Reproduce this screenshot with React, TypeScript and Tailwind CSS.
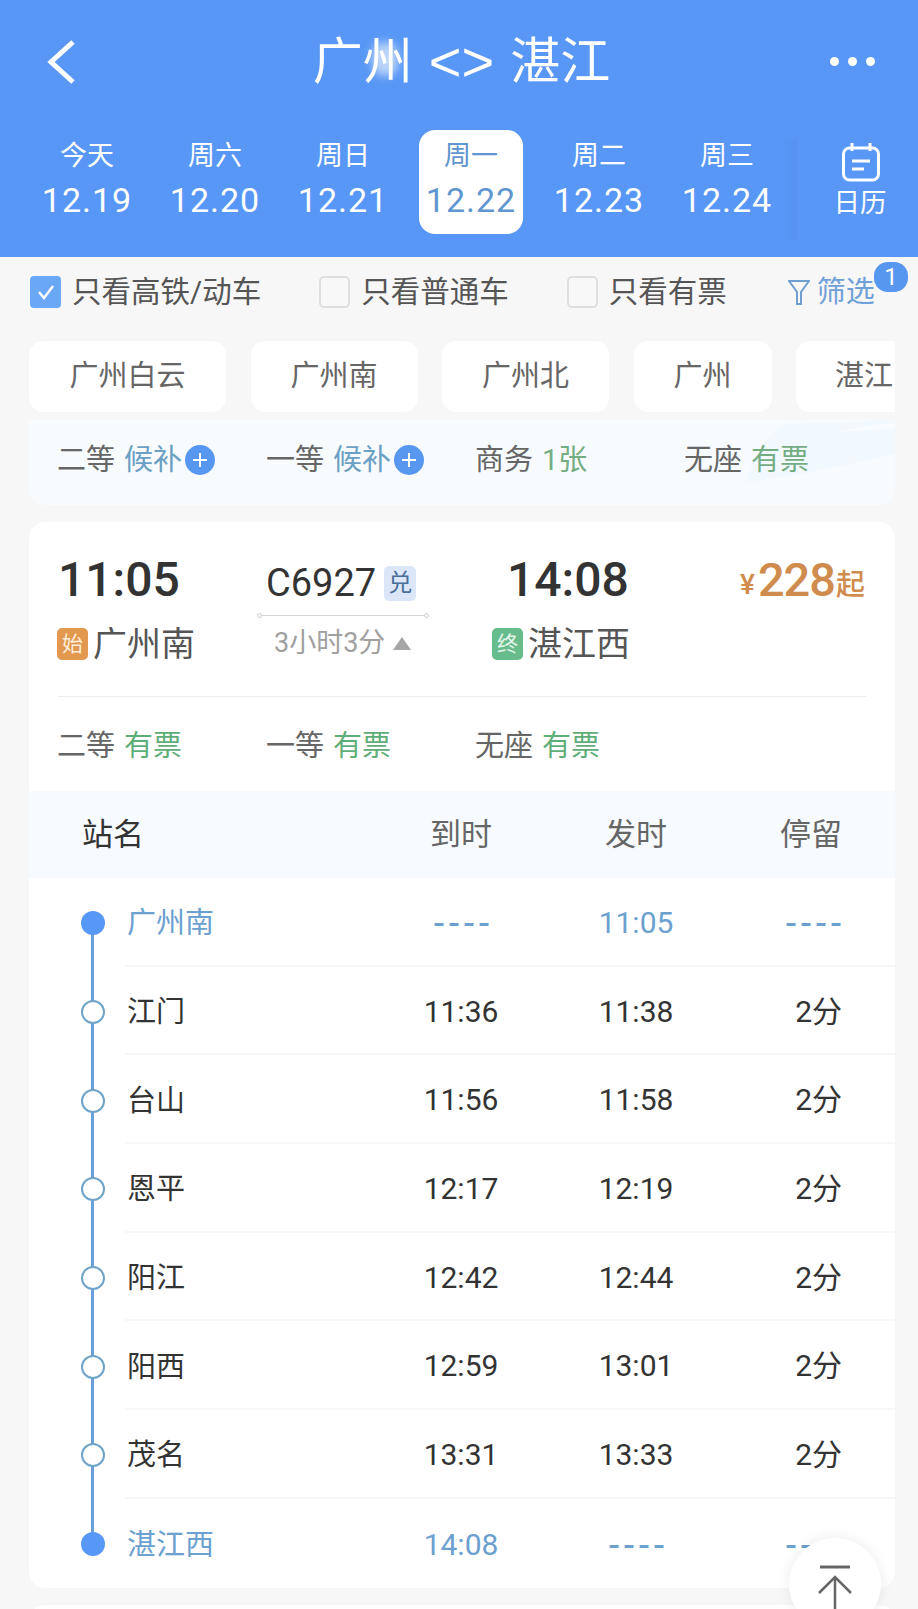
const FONT = "font-['Roboto','Noto_Sans_CJK_SC',sans-serif]";

const dates = [
  { week: '今天', day: '12.19' },
  { week: '周六', day: '12.20' },
  { week: '周日', day: '12.21' },
  { week: '周一', day: '12.22', active: true },
  { week: '周二', day: '12.23' },
  { week: '周三', day: '12.24' },
];

const chips = [
  { name: '广州白云', w: 'w-[197px]' },
  { name: '广州南', w: 'w-[167px]' },
  { name: '广州北', w: 'w-[167px]' },
  { name: '广州', w: 'w-[138px]' },
  { name: '湛江', w: 'w-[136px]' },
];

const stops = [
  { name: '广州南', arrive: '----', depart: '11:05', stay: '----', end: true },
  { name: '江门', arrive: '11:36', depart: '11:38', stay: '2分' },
  { name: '台山', arrive: '11:56', depart: '11:58', stay: '2分' },
  { name: '恩平', arrive: '12:17', depart: '12:19', stay: '2分' },
  { name: '阳江', arrive: '12:42', depart: '12:44', stay: '2分' },
  { name: '阳西', arrive: '12:59', depart: '13:01', stay: '2分' },
  { name: '茂名', arrive: '13:31', depart: '13:33', stay: '2分' },
  { name: '湛江西', arrive: '14:08', depart: '----', stay: '----', end: true },
];

function Check({ label, checked }: { label: string; checked?: boolean }) {
  return (
    <div className="flex items-center gap-[11px]">
      <div
        className={
          checked
            ? 'flex h-[32px] w-[31px] items-center justify-center rounded-[4px] bg-[#6aa8f5]'
            : 'h-[32px] w-[31px] rounded-[5px] border-2 border-[#dfdfdf] bg-[#f8f8f8]'
        }
      >
        {checked && (
          <svg width="20" height="20" viewBox="0 0 20 20" fill="none" stroke="#fff" strokeWidth="2.4">
            <path d="M3 10 L8 16 L17 4" />
          </svg>
        )}
      </div>
      <span className="pt-[1px] text-[29.5px] leading-none text-[#555]">{label}</span>
    </div>
  );
}

function Seat({ type, state, color, plus }: { type: string; state: string; color: string; plus?: boolean }) {
  return (
    <div className="flex w-[209px] items-center">
      <span className="text-[29px] leading-none text-[#666]">{type}</span>
      <span className={`ml-[9px] text-[29px] leading-none ${color}`}>{state}</span>
      {plus && (
        <span className="ml-[3px] flex h-[30px] w-[30px] items-center justify-center rounded-full bg-[#5797f0]">
          <svg width="18" height="18" viewBox="0 0 18 18" stroke="#fff" strokeWidth="2">
            <path d="M9 2 V16 M2 9 H16" />
          </svg>
        </span>
      )}
    </div>
  );
}

function Cell({ value, dashClass }: { value: string; dashClass: string }) {
  // the dashes in the picture are wider than the font's hyphen
  if (value === '----') {
    return (
      <span className={`inline-block font-['Liberation_Sans'] text-[36px] leading-[30px] tracking-[3px] ${dashClass}`}>
        {value}
      </span>
    );
  }
  return <span className="inline-block">{value}</span>;
}

export default function App() {
  return (
    <div className={`relative h-[1609px] w-[918px] overflow-hidden bg-[#f7f7f7] ${FONT}`}>
      {/* 顶部 */}
      <div className="h-[257px] bg-[#5897f5]">
        <div className="relative flex h-[130px] items-center justify-center pb-[6px] text-white">
          <svg className="absolute left-[46px] top-[40px]" width="30" height="44" viewBox="0 0 30 44" fill="none" stroke="#fff" strokeWidth="5">
            <path d="M27 2 L5 22 L27 42" />
          </svg>
          <div className="ml-[5px] flex items-center text-[50px] leading-none">
            <span>广州</span>
            <span className="mx-[16px] font-['Liberation_Sans'] text-[56px]">&lt;&gt;</span>
            <span>湛江</span>
          </div>
          <div className="absolute left-[372px] top-[42px] h-[34px] w-[26px] rounded-full bg-white/60 blur-[5px]" />
          <div className="absolute right-[43px] top-[57px] flex gap-[9px]">
            <span className="h-[9px] w-[9px] rounded-full bg-white" />
            <span className="h-[9px] w-[9px] rounded-full bg-white" />
            <span className="h-[9px] w-[9px] rounded-full bg-white" />
          </div>
        </div>
        <div className="flex h-[104px] pl-[23px]">
          {dates.map((d) => (
            <div key={d.day} className="flex w-[128px] justify-center">
              <div
                className={`flex h-[104px] w-[104px] flex-col items-center rounded-[16px] pt-[11px] ${
                  d.active ? 'bg-white text-[#5f96d0]' : 'text-white'
                }`}
              >
                <span className="text-[27px] leading-[30px]">{d.week}</span>
                <span className="mt-[10px] text-[34px] leading-[39px] tracking-[1px]">{d.day}</span>
              </div>
            </div>
          ))}
          <div className="relative -mt-[1px] ml-[16px] flex w-[108px] flex-col items-center pt-[13px] text-white">
            <div className="absolute -left-[24px] top-[11px] h-[100px] w-[14px] bg-gradient-to-r from-[#5897f5] to-[#5693f1]" />
            <svg width="40" height="40" viewBox="0 0 40 40" fill="none" stroke="#fff" strokeWidth="3">
              <rect x="2.5" y="6" width="35" height="32" rx="6" />
              <path d="M11 1 V9 M29 1 V9 M11 19 H29 M11 27 H23" />
            </svg>
            <span className="mt-[6px] -ml-[2px] text-[26.5px] leading-[30px]">日历</span>
          </div>
        </div>
      </div>

      {/* 筛选 */}
      <div className="relative flex h-[68px] items-center pt-[2px] pl-[30px]">
        <Check label="只看高铁/动车" checked />
        <div className="ml-[58px]">
          <Check label="只看普通车" />
        </div>
        <div className="ml-[58px]">
          <Check label="只看有票" />
        </div>
        <div className="ml-[61px] flex items-center gap-[7px]">
          <svg width="22" height="28" viewBox="0 0 22 28" fill="none" stroke="#6f9fd0" strokeWidth="2">
            <path d="M1 3 H21 L13 14 V26 H9 V14 Z" />
          </svg>
          <span className="text-[29px] leading-none text-[#6fa0d8]">筛选</span>
        </div>
        <div className="absolute left-[874px] top-[5px] flex h-[30px] w-[34px] items-center justify-center rounded-[14px] bg-[#5797f0] text-[24px] leading-none text-white">
          1
        </div>
      </div>

      {/* 车站 */}
      <div className="mx-[29px] mt-[16px] flex w-[866px] gap-[24.5px] overflow-hidden">
        {chips.map((c) => (
          <div
            key={c.name}
            className={`flex h-[71px] shrink-0 items-center justify-center rounded-[14px] bg-white text-[29px] leading-none text-[#666] ${c.w}`}
          >
            {c.name}
          </div>
        ))}
      </div>

      <div className="relative ml-[29px] mt-[8px] h-[85px] w-[866px] overflow-hidden rounded-b-[16px] bg-[#f7fbfe] pl-[28px] pt-[25px]">
        <svg className="absolute right-0 top-0" width="170" height="85" viewBox="0 0 170 85">
          <path fill="#f2f9fe" d="M170 0 L60 4 C40 14 28 36 22 62 C60 58 120 46 170 34 Z" />
          <path fill="#f9fcff" d="M115 12 C135 6 155 4 170 3 L170 8 C150 9 130 11 115 12 Z" />
        </svg>
        <div className="relative flex">
          <Seat type="二等" state="候补" color="text-[#6b9fc4]" plus />
          <Seat type="一等" state="候补" color="text-[#6b9fc4]" plus />
          <Seat type="商务" state="1张" color="text-[#74ad83]" />
          <Seat type="无座" state="有票" color="text-[#74ad83]" />
        </div>
      </div>

      {/* 车次卡片 */}
      <div className="ml-[29px] mt-[17px] h-[1066px] w-[866px] overflow-hidden rounded-[16px] bg-white">
        <div className="flex h-[174px] pt-[36px]">
          <div className="w-[228px] pl-[29px]">
            <div className="text-[48px] leading-[44px] font-medium text-[#333]">11:05</div>
            <div className="mt-[25px] flex items-center">
              <span className="-ml-[1px] flex h-[32px] w-[31px] items-center justify-center rounded-[5px] bg-[#e2984f] text-[21px] leading-none text-[#ffeeda]">
                始
              </span>
              <span className="ml-[5px] text-[34px] leading-none text-[#555]">广州南</span>
            </div>
          </div>
          <div className="w-[233px]">
            <div className="flex items-center pt-[3px] pl-[9px]">
              <span className="text-[38px] leading-[44px] text-[#333]">C6927</span>
              <span className="ml-[8px] flex h-[35px] w-[32px] items-center justify-center rounded-[5px] bg-[#dbe7f8] text-[24px] leading-none text-[#4a6d9a]">
                兑
              </span>
            </div>
            <div className="mt-[8px] flex w-[172px] items-center">
              <span className="h-[5px] w-[5px] rounded-full border border-[#ccc]" />
              <span className="h-px flex-1 bg-[#d4d4d4]" />
              <span className="h-[5px] w-[5px] rounded-full border border-[#ccc]" />
            </div>
            <div className="mt-[12px] flex items-center pl-[17px] text-[27px] leading-none text-[#a0a0a0]">
              3小时3分
              <span className="ml-[8px] h-0 w-0 border-x-[9px] border-b-[13px] border-x-transparent border-b-[#a5a5a5]" />
            </div>
          </div>
          <div className="w-[250px] pl-[2px]">
            <div className="pl-[15px] text-[48px] leading-[44px] font-medium text-[#333]">14:08</div>
            <div className="mt-[25px] flex items-center">
              <span className="flex h-[32px] w-[31px] items-center justify-center rounded-[5px] bg-[#68bc8c] text-[21px] leading-none text-[#e3f6ea]">
                终
              </span>
              <span className="ml-[5px] text-[34px] leading-none text-[#555]">湛江西</span>
            </div>
          </div>
          <div className="flex h-[44px] items-end leading-none font-medium text-[#d08c4e]">
            <span className="mb-[3px] text-[28px]">¥</span>
            <span className="ml-[3px] text-[47px] leading-[45px] tracking-[-1px]">228</span>
            <span className="mb-[2px] ml-[1px] text-[29px]">起</span>
          </div>
        </div>

        <div className="mx-[29px] h-px bg-[#ececec]" />

        <div className="flex h-[94px] items-center pt-[4px] pl-[28px]">
          <Seat type="二等" state="有票" color="text-[#5fae78]" />
          <Seat type="一等" state="有票" color="text-[#5fae78]" />
          <Seat type="无座" state="有票" color="text-[#5fae78]" />
        </div>

        {/* 经停站 */}
        <div className="flex h-[87px] items-center bg-[#f7fafe] text-[31px] leading-none text-[#666]">
          <span className="w-[344.5px] pl-[53px] text-[#333]">站名</span>
          <span className="w-[175px] text-center">到时</span>
          <span className="w-[175px] text-center">发时</span>
          <span className="w-[118.5px] text-right">停留</span>
        </div>

        {stops.map((s, i) => {
          const color = s.end ? 'text-[#6ba0cf]' : 'text-[#333]';
          return (
            <div key={s.name} className="flex h-[88.7px]">
              <div className="relative flex w-[96px] shrink-0 items-center pt-[2px] pl-[52px]">
                {i > 0 && <span className="absolute left-[62px] top-0 h-1/2 w-[3px] bg-[#6a9fdc]" />}
                {i < stops.length - 1 && <span className="absolute bottom-0 left-[62px] h-1/2 w-[3px] bg-[#6a9fdc]" />}
                <span
                  className={`relative h-[24px] w-[24px] rounded-full ${
                    s.end ? 'bg-[#5797f5]' : 'border-2 border-[#6fa3c8] bg-white'
                  }`}
                />
              </div>
              <div
                className={`flex flex-1 items-center pt-[3px] text-[29px] leading-none ${color} ${
                  i < stops.length - 1 ? 'border-b-2 border-[#f7f7f7]' : ''
                }`}
              >
                <span className="w-[248.5px] pt-[2px] pl-[2px]">{s.name}</span>
                <span className="w-[175px] text-center text-[30px]">
                  <Cell value={s.arrive} dashClass="translate-x-[2px]" />
                </span>
                <span className="w-[175px] text-center text-[30px]">
                  <Cell value={s.depart} dashClass="translate-x-[2px]" />
                </span>
                <span className="w-[118.5px] text-right text-[30px]">
                  <Cell value={s.stay} dashClass="translate-x-[3px]" />
                </span>
              </div>
            </div>
          );
        })}
      </div>

      <div className="ml-[29px] mt-[17px] h-[20px] w-[866px] rounded-t-[16px] bg-white" />

      {/* 回到顶部 */}
      <div className="absolute left-[789px] top-[1538px] flex h-[92px] w-[92px] flex-col items-center rounded-full bg-white pt-[27px] shadow-[0_0_14px_rgba(0,0,0,0.08)]">
        <svg width="36" height="46" viewBox="0 0 36 46" fill="none" stroke="#666" strokeWidth="3">
          <path d="M3 2 H33" />
          <path strokeWidth="2.5" d="M18 12 V46 M2 28 L18 12 L34 28" />
        </svg>
      </div>
    </div>
  );
}
